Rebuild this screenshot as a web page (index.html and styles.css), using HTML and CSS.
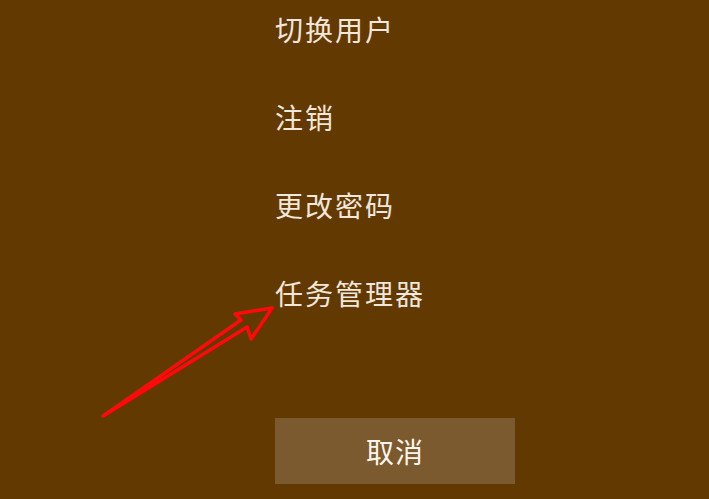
FILE: index.html
```html
<!DOCTYPE html>
<html lang="zh-CN">

<head>
    <meta charset="UTF-8">
    <title>安全选项</title>
    <link rel="stylesheet" href="styles.css">
</head>

<body>
    <div class="screen">
        <ul class="options">
            <li>切换用户</li>
            <li>注销</li>
            <li>更改密码</li>
            <li>任务管理器</li>
        </ul>
        <button class="cancel">取消</button>

        <!-- annotation arrow pointing at 任务管理器 -->
        <svg class="arrow" width="709" height="499" viewBox="0 0 709 499">
            <path d="M103 416 L241 320 L235 314 L272 308 L251 339 L247 327 Z"
                fill="none" stroke="#ff0a0a" stroke-width="3.5" stroke-linejoin="round" />
        </svg>
    </div>
</body>

</html>
```

FILE: styles.css
```css
html,
body {
    margin: 0;
    padding: 0;
    background-color: #623900;
}

.screen {
    position: relative;
    width: 709px;
    height: 499px;
    overflow: hidden;
    padding-left: 275px;
    box-sizing: border-box;
    font-family: "Noto Sans CJK SC", "Microsoft YaHei", sans-serif;
}

.options {
    list-style: none;
    margin: 0;
    padding: 15px 0 0 0;
    display: flex;
    flex-direction: column;
    gap: 60px;
}

.options li {
    font-size: 28px;
    line-height: 28px;
    color: #f1e7da;
    letter-spacing: 2px;
}

.cancel {
    display: block;
    margin-top: 111px;
    width: 240px;
    height: 66px;
    border: none;
    background-color: #7c5a2f;
    color: #fbf5ee;
    font-family: inherit;
    font-size: 28px;
    letter-spacing: 1px;
    cursor: pointer;
}

.arrow {
    position: absolute;
    left: 0;
    top: 0;
    pointer-events: none;
}
```
